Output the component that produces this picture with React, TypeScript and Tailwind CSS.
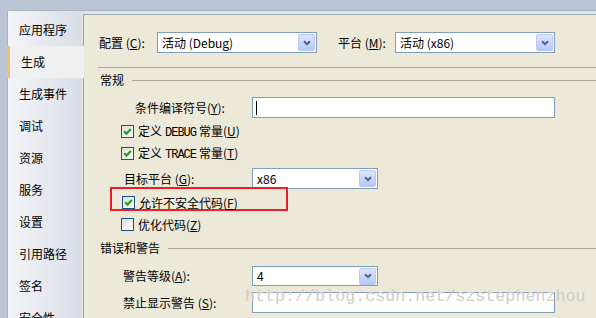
const font = "font-['Noto_Sans_CJK_SC','Liberation_Sans',sans-serif]";

const tabs = ["应用程序", "生成", "生成事件", "调试", "资源", "服务", "设置", "引用路径", "签名", "安全性"];

function Arrow() {
  return (
    <div className="w-[17px] h-[17px] rounded-[2px] border border-[#b9c9f0] bg-gradient-to-b from-[#dbe5fd] to-[#b6c9f7] flex items-center justify-center">
      <svg width="8" height="6" viewBox="0 0 8 6">
        <path d="M1 1.2 L4 4.2 L7 1.2" fill="none" stroke="#4d6185" strokeWidth="2" />
      </svg>
    </div>
  );
}

function Select({ w, h = 21, text }: { w: string; h?: number; text: string }) {
  return (
    <div
      className={`${w} border border-[#7f9db9] bg-white flex items-center pl-[4px] pr-[1px] shrink-0`}
      style={{ height: h }}
    >
      <span className="flex-1 text-[12px] leading-none">{text}</span>
      <Arrow />
    </div>
  );
}

function Check({ on }: { on?: boolean }) {
  return (
    <div className="w-[13px] h-[13px] border border-[#1c5180] bg-gradient-to-br from-[#dcdcd7] to-white flex items-center justify-center shrink-0">
      {on && (
        <svg width="9" height="9" viewBox="0 0 9 9">
          <path d="M1.2 4.2 L3.5 6.6 L7.8 2" fill="none" stroke="#21a121" strokeWidth="2.2" />
        </svg>
      )}
    </div>
  );
}

function Key({ k }: { k: string }) {
  return (
    <span>
      (<span className="underline">{k}</span>)
    </span>
  );
}

function Mono({ children }: { children: string }) {
  return (
    <span className="mx-[3px] font-['Liberation_Mono',monospace] text-[12px] tracking-[-1px]">{children}</span>
  );
}

function Header({ text, mt }: { text: string; mt: string }) {
  return (
    <div className={`${mt} h-[12px] flex items-center pl-[16px]`}>
      <span className="text-[12px] leading-none">{text}</span>
      <div className="flex-1 ml-[8px] h-px bg-[#aca899]" />
    </div>
  );
}

export default function App() {
  return (
    <div className={`${font} w-[596px] h-[318px] overflow-hidden bg-[#bac5d6] pt-[10px] pl-[7px] text-black relative`}>
      <div className="flex h-full bg-[#e0e4eb] border-t border-l border-[#a9b3c2] rounded-tl-[3px]">
        {/* side tabs */}
        <div className="w-[75px] flex flex-col shrink-0">
          {tabs.map((t, i) =>
            t === "生成" ? (
              <div
                key={t}
                className="h-[32px] shrink-0 flex items-center pl-[11px] bg-[#f0f0f0] border-l-[3px] border-[#efc46a] -ml-px w-[77px] relative z-10 text-[12px]"
              >
                {t}
              </div>
            ) : (
              <div
                key={t}
                className={`${i === 0 ? "h-[35px] pt-[3px]" : "h-[32px]"} shrink-0 flex items-center pl-[11px] bg-gradient-to-r from-[#f4f5f8] to-[#d9dde6] text-[12px]`}
              >
                <div className="flex-1">{t}</div>
              </div>
            )
          )}
        </div>

        {/* main panel */}
        <div className="flex-1 mt-[3px] bg-[#ece9d8] border-t border-l border-[#9ea8b7] flex flex-col text-[12px]">
          <div className="mt-[17px] flex items-center pl-[15px]">
            <span className="w-[58px] leading-none">
              配置 <Key k="C" />:
            </span>
            <Select w="w-[160px]" text="活动 (Debug)" />
            <span className="ml-[21px] w-[57px] leading-none">
              平台 <Key k="M" />:
            </span>
            <Select w="w-[160px]" text="活动 (x86)" />
          </div>

          <div className="mt-[14px] ml-[14px] h-px bg-[#aca899]" />

          <Header text="常规" mt="mt-[6px]" />

          <div className="mt-[11px] flex items-center pl-[51px]">
            <span className="w-[117px] leading-none">
              条件编译符号<Key k="Y" />:
            </span>
            <div className="w-[303px] h-[21px] border border-[#7f9db9] bg-white flex items-center pl-[3px]">
              <div className="w-px h-[14px] bg-black" />
            </div>
          </div>

          <div className="mt-[7px] flex items-center pl-[37px] h-[13px]">
            <Check on />
            <span className="ml-[4px] leading-none">
              定义<Mono>DEBUG</Mono>常量<Key k="U" />
            </span>
          </div>
          <div className="mt-[9px] flex items-center pl-[37px] h-[13px]">
            <Check on />
            <span className="ml-[4px] leading-none">
              定义<Mono>TRACE</Mono>常量<Key k="T" />
            </span>
          </div>

          <div className="mt-[8px] flex items-center pl-[40px]">
            <span className="w-[128px] leading-none">
              目标平台 <Key k="G" />:
            </span>
            <Select w="w-[126px]" text="x86" />
          </div>

          <div className="-mt-[2px] ml-[26px] w-[178px] h-[24px] border-2 border-[#ee1c24] flex items-start pt-[7px] pl-[10px]">
            <Check on />
            <span className="ml-[4px] leading-[13px]">
              允许不安全代码<Key k="F" />
            </span>
          </div>

          <div className="mt-[7px] flex items-center pl-[37px] h-[13px]">
            <Check />
            <span className="ml-[4px] leading-none">
              优化代码<Key k="Z" />
            </span>
          </div>

          <Header text="错误和警告" mt="mt-[11px]" />

          <div className="mt-[12px] flex items-center pl-[39px]">
            <span className="w-[129px] leading-none">
              警告等级<Key k="A" />:
            </span>
            <Select w="w-[126px]" h={20} text="4" />
          </div>

          <div className="mt-[6px] flex items-center pl-[39px]">
            <span className="w-[129px] leading-none">
              禁止显示警告 <Key k="S" />:
            </span>
            <div className="w-[303px] h-[21px] border border-[#7f9db9] bg-white" />
          </div>
        </div>
      </div>

      <div className="absolute left-[245px] top-[287px] font-['Liberation_Mono',monospace] text-[16.7px] leading-[20px] text-[#cfcec8] pointer-events-none">
        http://blog.csdn.net/szstephenzhou
      </div>
    </div>
  );
}
